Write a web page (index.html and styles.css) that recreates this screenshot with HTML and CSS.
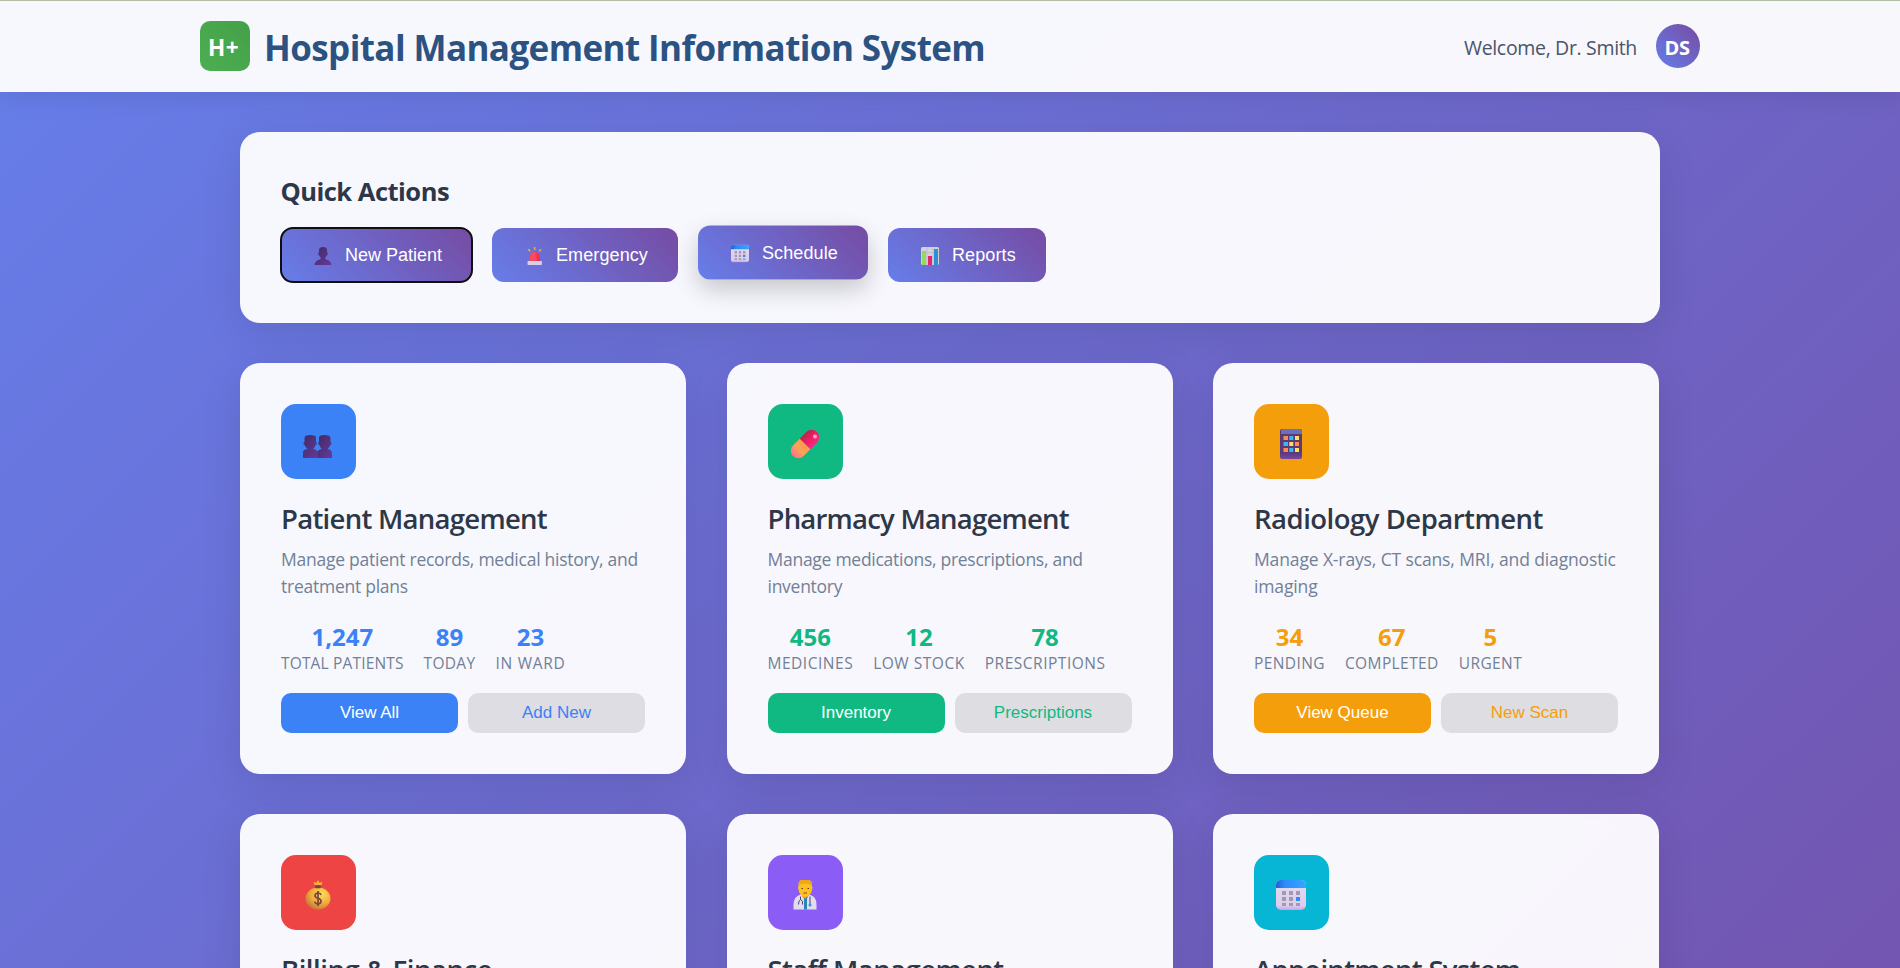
FILE: index.html
```html
<!DOCTYPE html>
<html lang="en">
<head>
<meta charset="utf-8">
<title>Hospital Management Information System</title>
<link rel="stylesheet" href="styles.css">
</head>
<body>
<svg class="defs" width="0" height="0" aria-hidden="true">
  <defs>
    <linearGradient id="g-purple" x1="0" y1="0" x2="1" y2="1"><stop offset="0" stop-color="#3f2a63"/><stop offset="1" stop-color="#66399a"/></linearGradient>
    <linearGradient id="g-blue" x1="0" y1="0" x2="1" y2="0"><stop offset="0" stop-color="#1f5fd8"/><stop offset=".3" stop-color="#2b8dfb"/><stop offset="1" stop-color="#35a6ff"/></linearGradient>
    <linearGradient id="g-page" x1="0" y1="0" x2="0" y2="1"><stop offset="0" stop-color="#e3dcef"/><stop offset=".85" stop-color="#dccdea"/><stop offset="1" stop-color="#c9a5e3"/></linearGradient>
    <linearGradient id="g-pink" x1="0" y1="0" x2="1" y2="0"><stop offset="0" stop-color="#b3284a"/><stop offset=".45" stop-color="#ee1b63"/><stop offset="1" stop-color="#f72b86"/></linearGradient>
    <linearGradient id="g-orange" x1="0" y1="0" x2="0" y2="1"><stop offset="0" stop-color="#f5a04c"/><stop offset=".5" stop-color="#ff9f5e"/><stop offset="1" stop-color="#ff6f8c"/></linearGradient>
    <radialGradient id="g-gold" cx=".65" cy=".3" r=".8"><stop offset="0" stop-color="#ffdc55"/><stop offset=".55" stop-color="#eeab3c"/><stop offset="1" stop-color="#c46a3c"/></radialGradient>
    <linearGradient id="g-slab" x1="0" y1="0" x2="0" y2="1"><stop offset="0" stop-color="#5a3a70"/><stop offset=".8" stop-color="#5b3a7d"/><stop offset="1" stop-color="#7a46a0"/></linearGradient>
    <linearGradient id="g-red" x1="0" y1="0" x2="1" y2="0"><stop offset="0" stop-color="#f0485e"/><stop offset=".45" stop-color="#ff4a5c"/><stop offset="1" stop-color="#e5204f"/></linearGradient>
    <symbol id="calendar" viewBox="0 0 30 30">
      <rect x="0" y="0" width="30" height="30" rx="5" fill="url(#g-page)"/>
      <path d="M0 8V5a5 5 0 0 1 5-5h20a5 5 0 0 1 5 5v3z" fill="url(#g-blue)"/>
      <path d="M6 11h4v4H6zM13 11h4v4h-4zM20 11h4v4h-4zM6 17h4v4H6zM13 17h4v4h-4zM6 23h4v3H6zM13 23h4v3h-4zM20 23h4v3h-4z" fill="#a398b3"/>
      <path d="M20 17h4v4h-4z" fill="#2b8dfb"/>
    </symbol>
  </defs>
</svg>
<header class="header">
  <div class="header-inner">
    <div class="brand">
      <div class="logo">H+</div>
      <h1 class="brand-name">Hospital Management Information System</h1>
    </div>
    <div class="user">
      <span class="welcome">Welcome, Dr. Smith</span>
      <div class="avatar">DS</div>
    </div>
  </div>
</header>
<main class="main">
  <section class="panel quick">
    <h2 class="quick-title">Quick Actions</h2>
    <div class="quick-row">
      <button class="action focused"><svg class="mini" viewBox="0 0 18 18"><path d="M5 3q0-3 4-3t4 3v2.600q.9.1.8 1.300T13 8.300Q12 11 9 11.200 6 11 5 8.300 4.300 8 4.200 6.900T5 5.600zM6.500 10h5v2.200q5.500 1 6 5.800H.5q.5-4.800 6-5.800z" fill="url(#g-purple)"/></svg><span>New Patient</span></button>
      <button class="action emergency"><svg class="mini" viewBox="-0.700 0 18 18"><path d="M9 0v3M2.600 2.200l2 2.100M15.400 2.200l-2 2.100" stroke="#f5b82e" stroke-width="1.300" fill="none"/><path d="M3.400 14l1.200-6Q5.200 5 9 5t4.400 3l1.200 6z" fill="url(#g-red)"/><rect x="1.800" y="14" width="14.400" height="4" rx=".8" fill="#d9cfe6"/></svg><span>Emergency</span></button>
      <button class="action schedule hovered"><svg class="mini"><use href="#calendar"/></svg><span>Schedule</span></button>
      <button class="action reports"><svg class="mini" viewBox="0 0 18 18"><rect width="18" height="18" rx="1.500" fill="#d6cfdd"/><path d="M0 5.500h18M0 10h18M6 0v18M12 0v18" stroke="#bdb4c6" stroke-width=".7"/><path d="M1 4h4v14H1z" fill="#8fdc5c"/><path d="M7 9h4v9H7z" fill="#e3256b"/><path d="M13 2h4v16h-4z" fill="#2d8fd6"/></svg><span>Reports</span></button>
    </div>
  </section>
  <section class="grid">
    <article class="panel card blue patients">
      <div class="tile"><svg viewBox="0.500 1 30 30"><path d="M2 10q0-3 6-3t5.500 3v4q1 .3.800 1.600T13 17.200Q12 20 10.500 21q5 .5 5 4v5H0v-4q0-4.500 5-5Q3 19.500 2.300 17.200 1 17 1 15.600T2 14z" fill="url(#g-purple)"/><path d="M28 10q0-3-6-3t-5.500 3v4q-1 .3-.800 1.600T17 17.200Q18 20 19.500 21q-4.500.5-4.500 4v5h14.500v-4q0-4.500-4.500-5 2-1.500 2.700-3.800Q29 17 29 15.600T28 14z" fill="url(#g-purple)"/></svg></div>
      <h3 class="card-title">Patient Management</h3>
      <p class="desc">Manage patient records, medical history, and<br>treatment plans</p>
      <div class="stats">
        <div class="stat"><b>1,247</b><small class="tight">TOTAL PATIENTS</small></div>
        <div class="stat"><b>89</b><small>TODAY</small></div>
        <div class="stat"><b>23</b><small class="wide">IN WARD</small></div>
      </div>
      <div class="buttons"><button class="btn solid">View All</button><button class="btn soft">Add New</button></div>
    </article>
    <article class="panel card green pharmacy">
      <div class="tile"><svg viewBox="0 0 30 30"><g transform="rotate(45 15 15)"><path d="M7.500 15V5.500a7.500 7.500 0 0 1 15 0V15z" fill="url(#g-pink)"/><path d="M7.500 15v9.500a7.500 7.500 0 0 0 15 0V15z" fill="url(#g-orange)"/></g><circle cx="25" cy="7.500" r="2" fill="#ffa3c4"/></svg></div>
      <h3 class="card-title">Pharmacy Management</h3>
      <p class="desc">Manage medications, prescriptions, and<br>inventory</p>
      <div class="stats">
        <div class="stat"><b>456</b><small>MEDICINES</small></div>
        <div class="stat"><b>12</b><small>LOW STOCK</small></div>
        <div class="stat"><b>78</b><small>PRESCRIPTIONS</small></div>
      </div>
      <div class="buttons"><button class="btn solid">Inventory</button><button class="btn soft">Prescriptions</button></div>
    </article>
    <article class="panel card amber radiology">
      <div class="tile"><svg viewBox="0 0 30 30"><rect x="4" y="0" width="22" height="30" rx="2" fill="url(#g-slab)"/><path d="M5 5V2a2 2 0 0 1 2-2h17a2 2 0 0 1 2 2v3z" fill="#6a6fc0"/><path d="M7.500 7h4.500v4H7.500zM19 13h4v4h-4zM7.500 19h4.500v4H7.500z" fill="#ff8a4c"/><path d="M13.300 7h4v4h-4zM7.500 13h4.500v4H7.500zM13.300 19h4v4h-4z" fill="#35b8f5"/><path d="M19 7h4v4h-4zM13.300 13h4v4h-4zM19 19h4v4h-4z" fill="#ffe05c"/></svg></div>
      <h3 class="card-title">Radiology Department</h3>
      <p class="desc">Manage X-rays, CT scans, MRI, and diagnostic<br>imaging</p>
      <div class="stats">
        <div class="stat"><b>34</b><small>PENDING</small></div>
        <div class="stat"><b>67</b><small>COMPLETED</small></div>
        <div class="stat"><b>5</b><small>URGENT</small></div>
      </div>
      <div class="buttons"><button class="btn solid">View Queue</button><button class="btn soft">New Scan</button></div>
    </article>
    <article class="panel card red billing">
      <div class="tile"><svg viewBox="0 0.500 30 30"><path d="M11.500 5.500L10.500 2.500l3 .7L15 .5l1.500 2.700 3-.7-1 3z" fill="#ffb03b"/><ellipse cx="15" cy="19" rx="12.500" ry="11" fill="url(#g-gold)"/><rect x="12.200" y="5.700" width="5.600" height="3" rx="1" fill="#6d4848"/><path d="M18 15.500q-.5-2-3-2t-3 2.400q0 2 3 2.800t3 3q0 2.600-3 2.600t-3.200-2.300M15 11.500v15" fill="none" stroke="#7a4440" stroke-width="1.700"/></svg></div>
      <h3 class="card-title">Billing &amp; Finance</h3>
    </article>
    <article class="panel card violet staff">
      <div class="tile"><svg viewBox="0 0.500 30 30"><path d="M3.500 30v-5q0-8 7-10h9q7 2 7 10v5z" fill="#e2dcef"/><path d="M12 15h7l-2 4v11h-3V19z" fill="#2c84b8"/><path d="M12 14h6v3l-3 2-3-2z" fill="#e8a21e"/><path d="M8.500 5q0-4 3-4.500 4-1 7 0 3.500.5 3.500 4.500v2q1 1 0 3-.4 6-6.800 7.500Q9 16 8.500 10q-1-2 0-3z" fill="#fcc21c"/><path d="M8.500 6q0-5 3.500-5.500t7 0Q22 1 22 6q-2-2-6.500-2t-7 2z" fill="#eea516"/><path d="M11.500 9h1.500M17.500 9H19" stroke="#5d3b2a" stroke-width="1.200"/><path d="M13.500 13.500h3.500" stroke="#d43b3b" stroke-width="1.200"/><path d="M10.500 17v3q-2 1-2 5M10.500 20q3 1 2 5M20 17v8" fill="none" stroke="#4d4372" stroke-width="1"/><circle cx="20" cy="25.500" r="1.500" fill="#3b8fe0"/></svg></div>
      <h3 class="card-title">Staff Management</h3>
    </article>
    <article class="panel card cyan appointments">
      <div class="tile"><svg><use href="#calendar"/></svg></div>
      <h3 class="card-title">Appointment System</h3>
    </article>
  </section>
</main>
</body>
</html>
```
FILE: styles.css
```css
* { box-sizing: border-box; margin: 0; padding: 0; }
body {
  height: 968px;
  overflow: hidden;
  font-family: "Open Sans", "Noto Sans", sans-serif;
  color: #2d3748;
  background: linear-gradient(135deg, #667eea 0%, #764ba2 100%) 0 0 / 100% 1716px no-repeat;
}
.defs { display: block; height: 0; }
.header {
  height: 92px;
  border-top: 1px solid #b3c0a5;
  background: rgba(255, 255, 255, .95);
  background-clip: padding-box;
  box-shadow: 0 3px 25px rgba(0, 0, 0, .1);
}
.header-inner { width: 1500px; margin: 0 auto; padding-top: 20px; display: flex; justify-content: space-between; }
.brand { display: flex; gap: 14px; }
.logo {
  width: 50px; height: 50px; border-radius: 10px; padding: 2px 3px 0 0;
  display: flex; align-items: center; justify-content: center;
  background: linear-gradient(45deg, #4caf50, #45a049);
  color: #fff; font-size: 22.5px; font-weight: 700; letter-spacing: .4px;
}
.brand-name { font-size: 35px; line-height: 54px; font-weight: 700; letter-spacing: -.59px; color: #2c5282; white-space: nowrap; }
.user { display: flex; gap: 19px; height: 50px; align-items: center; color: #4a5568; }
.welcome { font-size: 19.5px; letter-spacing: -.33px; padding-top: 3px; }
.avatar {
  width: 44px; height: 44px; margin-bottom: 1px; padding: 3px 2px 0 0; border-radius: 50%;
  display: flex; align-items: center; justify-content: center;
  background: linear-gradient(45deg, #667eea, #764ba2);
  color: #fff; font-size: 20px; font-weight: 700; letter-spacing: -.3px;
}
.main { width: 1420px; margin: 0 auto; padding-top: 40px; }
.panel {
  border: 1px solid rgba(255, 255, 255, .2);
  border-radius: 20px;
  padding: 40px;
  background: rgba(255, 255, 255, .95);
  box-shadow: 0 10px 40px rgba(0, 0, 0, .1);
}
.quick { height: 191px; }
.quick-title { font-size: 25.5px; line-height: 35px; font-weight: 700; letter-spacing: -.5px; padding-top: 1px; margin: 0 0 19px -.6px; }
.quick-row { display: flex; gap: 20px; }
.action {
  width: 191px; height: 54px; padding: 0 0 0 30px; border: 0; border-radius: 12px;
  display: flex; align-items: center; gap: 13px;
  background: linear-gradient(45deg, #667eea, #764ba2);
  color: #fff; font: 500 18px "Liberation Sans", Arial, sans-serif; white-space: nowrap;
}
.emergency { width: 186px; letter-spacing: .1px; }
.schedule { width: 170px; letter-spacing: .1px; }
.reports { width: 158px; letter-spacing: .1px; }
.mini { flex: none; width: 18px; height: 18px; margin: 2px 0 0 3px; }
.focused { outline: 2px solid #101010; outline-offset: -1px; }
.hovered { transform: translateY(-2.5px); box-shadow: 0 10px 25px rgba(0, 0, 0, .2); }
.grid { width: 1419px; margin-top: 40px; display: grid; grid-template-columns: repeat(3, minmax(0, 446px)); justify-content: space-between; row-gap: 40px; }
.card { height: 411px; }
.tile {
  width: 75px; height: 75px; border-radius: 15px; padding: 4px 1px 0 0; margin-bottom: 20px;
  display: flex; align-items: center; justify-content: center; background: var(--tone);
}
.tile svg { width: 30px; height: 30px; }
.blue { --tone: #3b82f6; }
.green { --tone: #10b981; }
.amber { --tone: #f59e0b; }
.red { --tone: #ef4444; }
.violet { --tone: #8b5cf6; }
.cyan { --tone: #06b6d4; }
.card-title { font-size: 27.5px; line-height: 38px; font-weight: 600; padding-top: 1px; margin-bottom: 8px; white-space: nowrap; }
.desc { font-size: 17.5px; line-height: 27px; color: #718096; margin-bottom: 21px; white-space: nowrap; }
.stats { display: flex; gap: 20px; margin-bottom: 19px; }
.stat { display: flex; flex-direction: column; align-items: center; }
.stat b { font-size: 24px; line-height: 31px; font-weight: 700; color: var(--tone); }
.stat small { font-size: 15.5px; line-height: 22px; color: #718096; }

/* letter spacing per card */
.patients .card-title { letter-spacing: -.72px; }
.patients .desc { letter-spacing: -.25px; }
.patients small { letter-spacing: .3px; }
.patients .tight { letter-spacing: .16px; }
.patients .wide { letter-spacing: .73px; }
.pharmacy .card-title { letter-spacing: -.78px; }
.pharmacy .desc { letter-spacing: -.27px; }
.pharmacy small { letter-spacing: .52px; }
.radiology .card-title { letter-spacing: -.5px; }
.radiology .desc { letter-spacing: -.13px; }
.radiology small { letter-spacing: .4px; }
.billing .card-title { letter-spacing: -.46px; }
.staff .card-title { letter-spacing: -.57px; }
.appointments .card-title { letter-spacing: -.7px; }

.buttons { display: flex; gap: 10px; }
.btn { flex: 1; height: 40px; border: 0; border-radius: 10px; font: 500 17px "Liberation Sans", Arial, sans-serif; }
.solid { background: var(--tone); color: #fff; }
.soft { background: rgba(0, 0, 0, .1); color: var(--tone); }
```
